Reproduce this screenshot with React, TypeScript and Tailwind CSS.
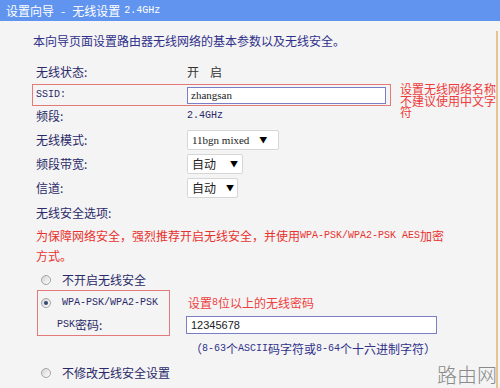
import React from "react";

const mono = "font-['Liberation_Mono','Noto_Sans_CJK_SC',monospace] text-[10px]";

function Radio({ checked }: { checked?: boolean }) {
  return (
    <span className="flex h-[10px] w-[10px] shrink-0 items-center justify-center rounded-full border border-[#a4a4a4] bg-gradient-to-br from-[#d4d4d4] to-white">
      {checked && <span className="h-[4px] w-[4px] rounded-full bg-[#34496e]" />}
    </span>
  );
}

function Select({ children, width, arrowGap }: { children: React.ReactNode; width: string; arrowGap: string }) {
  return (
    <div className={`flex h-[20px] items-center rounded-[2px] border border-[#d6d6d6] bg-white pl-[4px] text-[#222] ${width}`}>
      {children}
      <span className={`text-[8px] text-black ${arrowGap}`}>▼</span>
    </div>
  );
}

function Row({ label, children, className = "" }: { label: React.ReactNode; children?: React.ReactNode; className?: string }) {
  return (
    <div className={`flex items-center pl-[4px] ${className}`}>
      <div className="w-[151px] text-[#2a2a68]">{label}</div>
      {children}
    </div>
  );
}

export default function App() {
  return (
    <div className="relative h-[388px] w-[500px] overflow-hidden bg-[#f4f4f4] font-['Noto_Sans_CJK_SC',sans-serif] text-[12px] leading-none">
      {/* 标题栏 */}
      <div className="flex h-[21px] items-center bg-[#6094ef] pl-[6px] text-white">
        <span>设置向导</span>
        <span className="mx-[7px]">-</span>
        <span>无线设置</span>
        <span className={`ml-[4px] ${mono}`}>2.4GHz</span>
      </div>

      <div className="mr-[2px] h-[367px] border-r-2 border-[#e4c490] pl-[32px]">
        <div className="ml-[1px] mt-[10px] flex h-[20px] items-center text-[#30308a]">
          本向导页面设置路由器无线网络的基本参数以及无线安全。
        </div>

        <Row label="无线状态:" className="mt-[11px] h-[20px]">
          <span className="text-[#333]">开</span>
          <span className="ml-[11px] text-[#333]">启</span>
        </Row>

        {/* SSID 红框 */}
        <div className="mt-[2px] flex h-[22px] w-[359px] items-center border border-[#e27a7a] pl-[3px]">
          <div className={`w-[151px] text-[#2a2a68] ${mono}`}>SSID:</div>
          <div className="flex h-[17px] w-[199px] items-center border border-[#7a7ec4] bg-white pl-[3px] font-['Liberation_Serif',serif] text-[11px] text-[#222]">
            zhangsan
          </div>
        </div>

        <Row label="频段:" className="h-[20px]">
          <span className={`text-[#2a2a68] ${mono}`}>2.4GHz</span>
        </Row>

        <Row label="无线模式:" className="mt-[2px] h-[24px]">
          <Select width="w-[92px]" arrowGap="ml-[10px]">
            <span className="font-['Liberation_Serif',serif] text-[11px]">11bgn mixed</span>
          </Select>
        </Row>

        <Row label="频段带宽:" className="h-[24px]">
          <Select width="w-[56px]" arrowGap="ml-[14px]">
            <span>自动</span>
          </Select>
        </Row>

        <Row label="信道:" className="h-[23px]">
          <Select width="w-[51px]" arrowGap="ml-[10px]">
            <span>自动</span>
          </Select>
        </Row>

        <div className="mt-[4px] flex h-[20px] items-center pl-[4px] text-[#2a2a68]">无线安全选项:</div>

        <div className="mt-[3px] flex h-[20px] items-center pl-[4px] text-[#e8322e]">
          为保障网络安全，强烈推荐开启无线安全，并使用
          <span className={mono}>WPA-PSK/WPA2-PSK AES</span>加密
        </div>
        <div className="flex h-[20px] items-center pl-[4px] text-[#e8322e]">方式。</div>

        <div className="mt-[4px] flex h-[20px] items-center pl-[9px] text-[#2a2a68]">
          <Radio />
          <span className="ml-[11px]">不开启无线安全</span>
        </div>

        {/* WPA 红框 */}
        <div className="flex h-[46px]">
          <div className="ml-[5px] h-[46px] w-[133px] border border-[#e27a7a]">
            <div className="flex h-[23px] items-center pl-[3px]">
              <Radio checked />
              <span className={`ml-[11px] text-[#2a2a68] ${mono}`}>WPA-PSK/WPA2-PSK</span>
            </div>
            <div className="flex h-[21px] items-center pl-[19px] text-[#2a2a68]">
              <span className={mono}>PSK</span>密码:
            </div>
          </div>
          <div className="ml-[16px] flex flex-col">
            <div className="mt-[3px] flex h-[20px] items-center pl-[2px] text-[#ee4040]">
              设置<span className={mono}>8</span>位以上的无线密码
            </div>
            <div className="mt-[3px] flex h-[18px] w-[251px] items-center border border-[#7a7ec4] bg-white pl-[4px] font-['Liberation_Sans',sans-serif] text-[11px] text-[#222]">
              12345678
            </div>
          </div>
        </div>

        <div className="mt-[3px] flex h-[20px] items-center pl-[158px] text-[#30308a]">
          （<span className={mono}>8-63</span>个<span className={mono}>ASCII</span>码字符或
          <span className={mono}>8-64</span>个十六进制字符）
        </div>

        <div className="mt-[4px] flex h-[20px] items-center pl-[9px] text-[#2a2a68]">
          <Radio />
          <span className="ml-[11px]">不修改无线安全设置</span>
        </div>
      </div>

      {/* 标注 */}
      <div className="absolute left-[400px] top-[83px] w-[97px] text-[12px] leading-[11.5px] text-[#ee3b3b]">
        设置无线网络名称不建议使用中文字符
      </div>

      {/* 水印 */}
      <div className="absolute bottom-[3px] right-[3px] text-[20px] font-light text-[#8a8a8a]">路由网</div>
    </div>
  );
}
